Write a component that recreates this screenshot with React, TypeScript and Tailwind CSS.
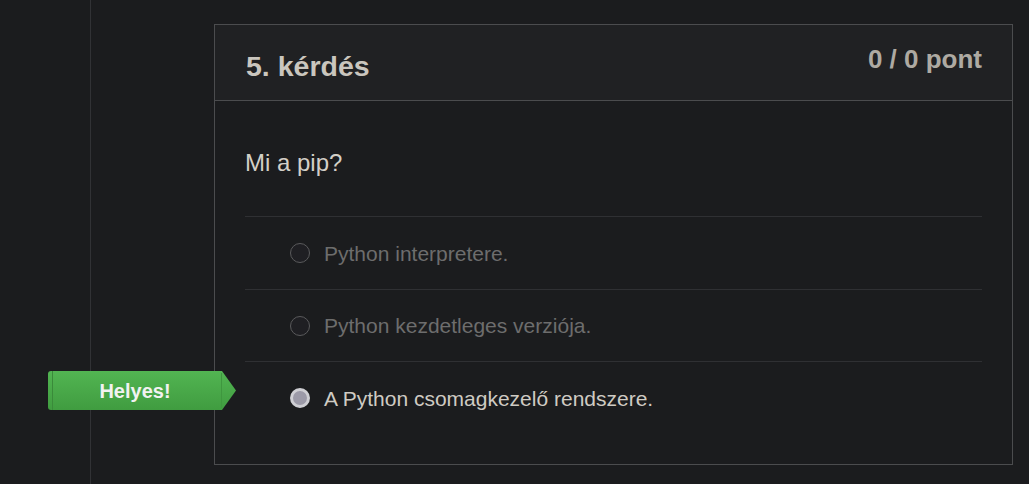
const options = [
  { text: "Python interpretere.", selected: false, h: "h-[73px]" },
  { text: "Python kezdetleges verziója.", selected: false, h: "h-[72px]" },
  { text: "A Python csomagkezelő rendszere.", selected: true, h: "h-[73px]" },
];

const Radio = ({ selected }: { selected: boolean }) =>
  selected ? (
    <span className="block w-[20px] h-[20px] shrink-0 rounded-full bg-[#9c9aa8] border-[3px] border-[#cfcfd4]" />
  ) : (
    <span className="block w-[20px] h-[20px] shrink-0 rounded-full bg-[#1f1f23] border border-[#5a5a5c]" />
  );

const CorrectBadge = () => (
  <div className="absolute left-[-197px] top-[9px] flex h-[39px]">
    <div className="relative w-[174px] h-[39px] rounded-l-[3px] bg-gradient-to-b from-[#52b552] to-[#409c40] flex items-center justify-center">
      <span className="absolute left-[4px] top-0 bottom-0 w-px bg-[#3a8a3a]" />
      <span className="absolute right-0 top-[2px] bottom-[2px] w-px bg-[#3f973f]" />
      <span className="text-[20px] leading-none font-bold text-[#f2f2f2]">Helyes!</span>
    </div>
    <svg width="14" height="39" viewBox="0 0 14 39" className="block">
      <defs>
        <linearGradient id="g" x1="0" y1="0" x2="0" y2="1">
          <stop offset="0" stopColor="#52b552" />
          <stop offset="1" stopColor="#409c40" />
        </linearGradient>
      </defs>
      <polygon points="0,0 14,19.5 0,39" fill="url(#g)" />
    </svg>
  </div>
);

export default function App() {
  return (
    <div
      className="min-h-[484px] w-full bg-[#1b1c1e] flex"
      style={{ fontFamily: '"Liberation Sans", Arial, sans-serif' }}
    >
      <aside className="w-[91px] shrink-0 border-r border-[#313235] min-h-[484px]" />
      <main className="flex-1 pl-[123px] pr-[16px] pt-[24px]">
        <section className="border border-[#4b4c4e] bg-[#1b1c1e]">
          <div className="h-[76px] bg-[#202123] border-b border-[#4b4c4e] px-[30px] flex items-start justify-between">
            <h2 className="pt-[27px] pl-px text-[28.5px] leading-[28px] font-bold text-[#cac6be]">
              5. kérdés
            </h2>
            <span className="pt-[21px] text-[26px] leading-[26px] font-bold text-[#aeaaa2]">
              0 / 0 pont
            </span>
          </div>
          <div className="px-[30px] pb-[30px]">
            <p className="pt-[50px] pb-[41px] text-[24px] leading-[24px] text-[#d3cfc7]">
              Mi a pip?
            </p>
            {options.map((o) => (
              <div
                key={o.text}
                className={`relative ${o.h} border-t border-[#2f3033] pl-[45px] flex items-center gap-[14px]`}
              >
                {o.selected && <CorrectBadge />}
                <Radio selected={o.selected} />
                <span
                  className={
                    o.selected
                      ? "text-[21px] leading-[21px] text-[#cfcbc3]"
                      : "text-[21px] leading-[21px] text-[#6d6d6d]"
                  }
                >
                  {o.text}
                </span>
              </div>
            ))}
          </div>
        </section>
      </main>
    </div>
  );
}
